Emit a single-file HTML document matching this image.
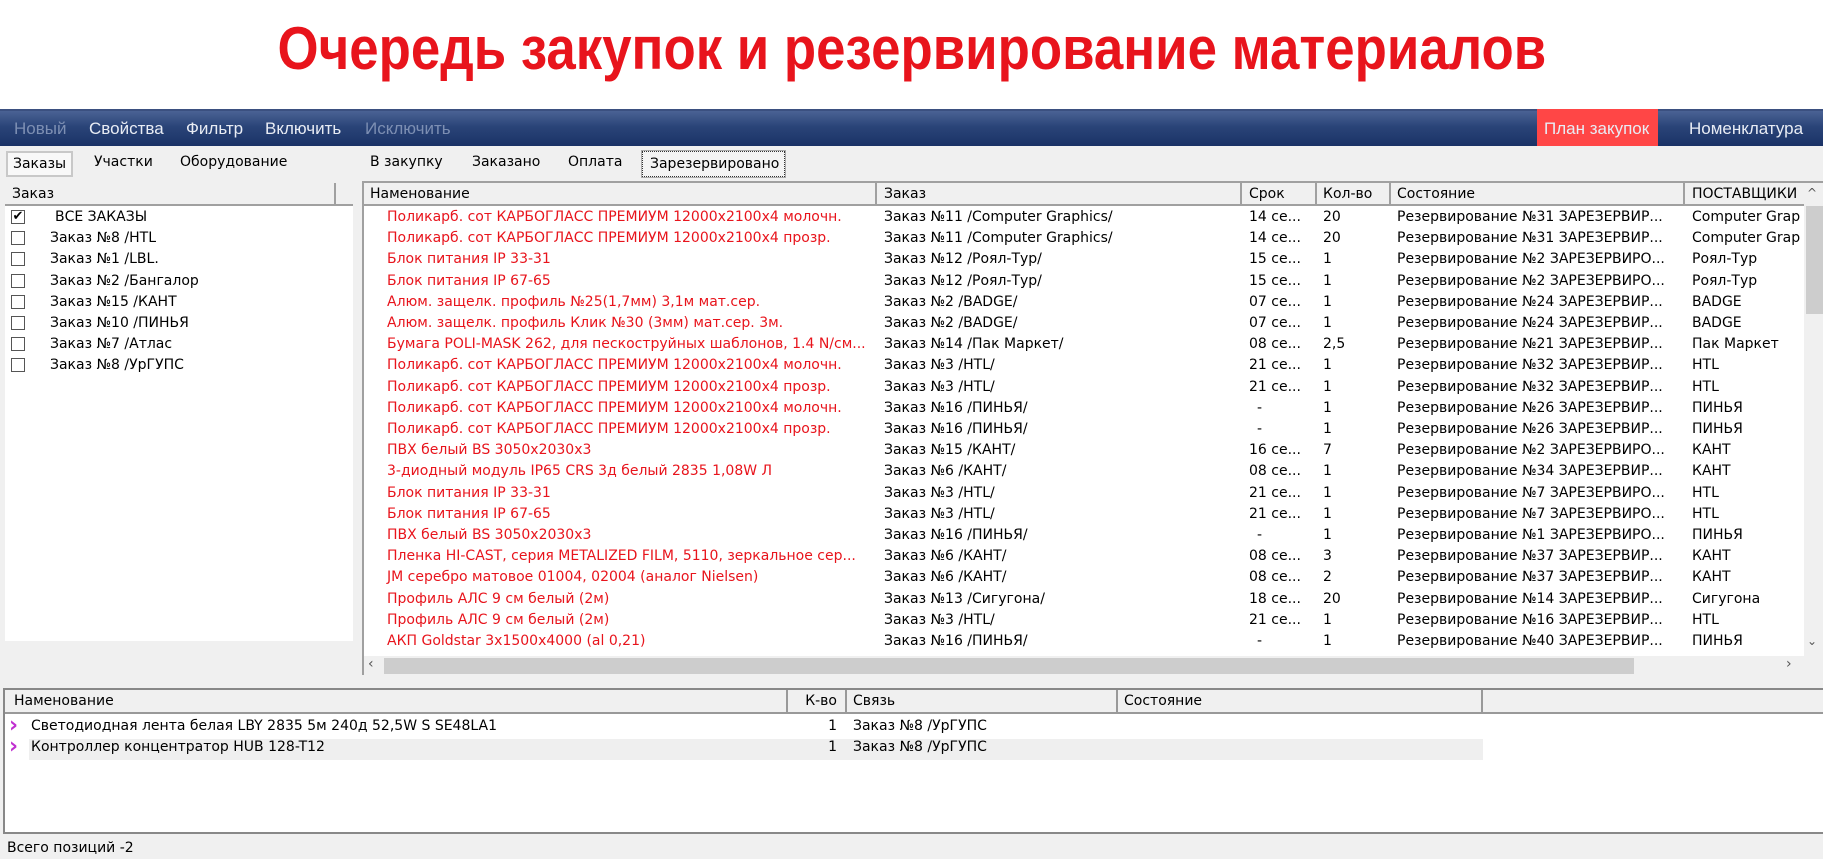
<!DOCTYPE html>
<html><head><meta charset="utf-8"><style>
*{margin:0;padding:0;box-sizing:border-box}
body{width:1823px;height:859px;background:#fff;position:relative;overflow:hidden;font-family:Tahoma,"DejaVu Sans","Liberation Sans",sans-serif;font-size:14px;color:#000}
.a{position:absolute;white-space:nowrap}
#title{left:0;width:1823px;top:14px;text-align:center;font-family:"Liberation Sans",sans-serif;font-weight:bold;font-size:60px;color:#e8141c;line-height:70px}
#title span{display:inline-block;transform:scaleX(0.88)}
#tb{left:0;top:109px;width:1823px;height:37px;background:linear-gradient(#4a6294,#2a4478 45%,#1a3266);border-top:2px solid #3b5080}
#tb .a{top:8px;font-family:"Liberation Sans",sans-serif;font-size:17px;color:#e8ecf4}
#main{left:0;top:146px;width:1823px;height:713px;background:#f0f0f0}
.hd{background:#f0f0f0;border-bottom:2px solid #a0a0a0}
.red{color:#e8141c}
.row{position:absolute;height:21px;line-height:21px}
.mk{color:#c030d0;font-weight:bold;font-size:22px;line-height:20px}
</style></head><body>
<div id="title" class="a"><span>Очередь закупок и резервирование материалов</span></div>
<div id="tb" class="a">
<div class="a" style="left:14px;color:#7d8fb3">Новый</div>
<div class="a" style="left:89px">Свойства</div>
<div class="a" style="left:186px">Фильтр</div>
<div class="a" style="left:265px">Включить</div>
<div class="a" style="left:365px;color:#7d8fb3">Исключить</div>
<div class="a" style="left:1537px;top:-2px;width:121px;height:37px;background:#ff4646"></div>
<div class="a" style="left:1544px">План закупок</div>
<div class="a" style="left:1689px">Номенклатура</div>
</div>
<div id="main" class="a"></div>
<div class="a" style="left:6px;top:151px;width:67px;height:26px;border:2px solid #c8c8c8;background:#f8f8f8"></div>
<div class="a" style="left:13px;top:156px">Заказы</div>
<div class="a" style="left:94px;top:154px">Участки</div>
<div class="a" style="left:180px;top:154px">Оборудование</div>
<div class="a" style="left:370px;top:154px">В закупку</div>
<div class="a" style="left:472px;top:154px">Заказано</div>
<div class="a" style="left:568px;top:154px">Оплата</div>
<div class="a" style="left:642px;top:151px;width:143px;height:26px;border:1px dotted #333;background:#f4f4f4;outline:1px solid #aaa"></div>
<div class="a" style="left:650px;top:156px">Зарезервировано</div>
<div class="a" style="left:5px;top:183px;width:348px;height:458px;background:#fff"></div>
<div class="a hd" style="left:5px;top:183px;width:348px;height:23px"></div>
<div class="a" style="left:334px;top:183px;width:2px;height:21px;background:#a0a0a0"></div>
<div class="a" style="left:12px;top:186px">Заказ</div>
<div id="left"></div>
<div class="a" style="left:362px;top:181px;width:1461px;height:494px;background:#fff;border-left:2px solid #a0a0a0;border-top:2px solid #a0a0a0"></div>
<div class="a hd" style="left:364px;top:183px;width:1440px;height:23px"></div>
<div class="a" style="left:370px;top:186px">Наменование</div>
<div class="a" style="left:884px;top:186px">Заказ</div>
<div class="a" style="left:1249px;top:186px">Срок</div>
<div class="a" style="left:1323px;top:186px">Кол-во</div>
<div class="a" style="left:1397px;top:186px">Состояние</div>
<div class="a" style="left:1692px;top:186px">ПОСТАВЩИКИ</div>
<div class="a" style="left:875px;top:183px;width:2px;height:21px;background:#a0a0a0"></div>
<div class="a" style="left:1240px;top:183px;width:2px;height:21px;background:#a0a0a0"></div>
<div class="a" style="left:1315px;top:183px;width:2px;height:21px;background:#a0a0a0"></div>
<div class="a" style="left:1389px;top:183px;width:2px;height:21px;background:#a0a0a0"></div>
<div class="a" style="left:1683px;top:183px;width:2px;height:21px;background:#a0a0a0"></div>
<div id="grid"></div>
<div class="a" style="left:1804px;top:183px;width:19px;height:473px;background:#f0f0f0"></div>
<div class="a" style="left:1807px;top:186px;font-size:12px;color:#555">^</div>
<div class="a" style="left:1806px;top:206px;width:17px;height:108px;background:#cdcdcd"></div>
<div class="a" style="left:1807px;top:634px;font-size:12px;color:#555">⌄</div>
<div class="a" style="left:364px;top:656px;width:1459px;height:19px;background:#f0f0f0"></div>
<div class="a" style="left:368px;top:656px;font-size:14px;color:#555">‹</div>
<div class="a" style="left:384px;top:658px;width:1250px;height:16px;background:#cdcdcd"></div>
<div class="a" style="left:1786px;top:656px;font-size:14px;color:#555">›</div>
<div class="a" style="left:3px;top:688px;width:1820px;height:146px;background:#fff;border:2px solid #888;border-right:none"></div>
<div class="a hd" style="left:5px;top:690px;width:1818px;height:24px;border-bottom:2px solid #999"></div>
<div class="a" style="left:786px;top:690px;width:2px;height:22px;background:#999"></div>
<div class="a" style="left:845px;top:690px;width:2px;height:22px;background:#999"></div>
<div class="a" style="left:1116px;top:690px;width:2px;height:22px;background:#999"></div>
<div class="a" style="left:1481px;top:690px;width:2px;height:22px;background:#999"></div>
<div class="a" style="left:14px;top:693px">Наменование</div>
<div class="a" style="left:788px;top:693px;width:49px;text-align:right">К-во</div>
<div class="a" style="left:853px;top:693px">Связь</div>
<div class="a" style="left:1124px;top:693px">Состояние</div>
<div class="a" style="left:29px;top:739px;width:1454px;height:21px;background:#efefef"></div>
<div class="a mk" style="left:9px;top:716px">›</div>
<div class="a mk" style="left:9px;top:737px">›</div>
<div class="a" style="left:31px;top:718px">Светодиодная лента белая LBY 2835 5м 240д 52,5W S SE48LA1</div>
<div class="a" style="left:788px;top:718px;width:49px;text-align:right">1</div>
<div class="a" style="left:853px;top:718px">Заказ №8 /УрГУПС</div>
<div class="a" style="left:31px;top:739px">Контроллер концентратор HUB 128-T12</div>
<div class="a" style="left:788px;top:739px;width:49px;text-align:right">1</div>
<div class="a" style="left:853px;top:739px">Заказ №8 /УрГУПС</div>
<div class="a" style="left:7px;top:840px">Всего позиций -2</div>
<script>
var L=[["ВСЕ ЗАКАЗЫ",1],["Заказ №8 /HTL"],["Заказ №1 /LBL."],["Заказ №2 /Бангалор"],["Заказ №15 /КАНТ"],["Заказ №10 /ПИНЬЯ"],["Заказ №7 /Атлас"],["Заказ №8 /УрГУПС"]];
var h="";
L.forEach(function(r,i){var y=207+i*21.2;
h+='<div class="a" style="left:11px;top:'+(y+3)+'px;width:14px;height:14px;border:1px solid #555;background:#fff;font-size:13px;line-height:12px;text-align:center">'+(r[1]?'✔':'')+'</div>';
h+='<div class="row" style="left:'+(r[1]?55:50)+'px;top:'+y+'px">'+r[0]+'</div>';});
document.getElementById('left').innerHTML=h;
var G=[
["Поликарб. сот КАРБОГЛАСС ПРЕМИУМ 12000x2100x4 молочн.","Заказ №11 /Computer Graphics/","14 се...","20","Резервирование №31 ЗАРЕЗЕРВИР...","Computer Grap"],
["Поликарб. сот КАРБОГЛАСС ПРЕМИУМ 12000x2100x4 прозр.","Заказ №11 /Computer Graphics/","14 се...","20","Резервирование №31 ЗАРЕЗЕРВИР...","Computer Grap"],
["Блок питания IP 33-31","Заказ №12 /Роял-Тур/","15 се...","1","Резервирование №2 ЗАРЕЗЕРВИРО...","Роял-Тур"],
["Блок питания IP 67-65","Заказ №12 /Роял-Тур/","15 се...","1","Резервирование №2 ЗАРЕЗЕРВИРО...","Роял-Тур"],
["Алюм. защелк. профиль №25(1,7мм) 3,1м мат.сер.","Заказ №2 /BADGE/","07 се...","1","Резервирование №24 ЗАРЕЗЕРВИР...","BADGE"],
["Алюм. защелк. профиль Клик №30 (3мм) мат.сер. 3м.","Заказ №2 /BADGE/","07 се...","1","Резервирование №24 ЗАРЕЗЕРВИР...","BADGE"],
["Бумага POLI-MASK 262, для пескоструйных шаблонов, 1.4 N/см...","Заказ №14 /Пак Маркет/","08 се...","2,5","Резервирование №21 ЗАРЕЗЕРВИР...","Пак Маркет"],
["Поликарб. сот КАРБОГЛАСС ПРЕМИУМ 12000x2100x4 молочн.","Заказ №3 /HTL/","21 се...","1","Резервирование №32 ЗАРЕЗЕРВИР...","HTL"],
["Поликарб. сот КАРБОГЛАСС ПРЕМИУМ 12000x2100x4 прозр.","Заказ №3 /HTL/","21 се...","1","Резервирование №32 ЗАРЕЗЕРВИР...","HTL"],
["Поликарб. сот КАРБОГЛАСС ПРЕМИУМ 12000x2100x4 молочн.","Заказ №16 /ПИНЬЯ/","-","1","Резервирование №26 ЗАРЕЗЕРВИР...","ПИНЬЯ"],
["Поликарб. сот КАРБОГЛАСС ПРЕМИУМ 12000x2100x4 прозр.","Заказ №16 /ПИНЬЯ/","-","1","Резервирование №26 ЗАРЕЗЕРВИР...","ПИНЬЯ"],
["ПВХ белый BS 3050x2030x3","Заказ №15 /КАНТ/","16 се...","7","Резервирование №2 ЗАРЕЗЕРВИРО...","КАНТ"],
["3-диодный модуль IP65 CRS 3д белый 2835 1,08W Л","Заказ №6 /КАНТ/","08 се...","1","Резервирование №34 ЗАРЕЗЕРВИР...","КАНТ"],
["Блок питания IP 33-31","Заказ №3 /HTL/","21 се...","1","Резервирование №7 ЗАРЕЗЕРВИРО...","HTL"],
["Блок питания IP 67-65","Заказ №3 /HTL/","21 се...","1","Резервирование №7 ЗАРЕЗЕРВИРО...","HTL"],
["ПВХ белый BS 3050x2030x3","Заказ №16 /ПИНЬЯ/","-","1","Резервирование №1 ЗАРЕЗЕРВИРО...","ПИНЬЯ"],
["Пленка HI-CAST, серия METALIZED FILM, 5110, зеркальное сер...","Заказ №6 /КАНТ/","08 се...","3","Резервирование №37 ЗАРЕЗЕРВИР...","КАНТ"],
["JM серебро матовое 01004, 02004 (аналог Nielsen)","Заказ №6 /КАНТ/","08 се...","2","Резервирование №37 ЗАРЕЗЕРВИР...","КАНТ"],
["Профиль АЛС 9 см белый (2м)","Заказ №13 /Сигугона/","18 се...","20","Резервирование №14 ЗАРЕЗЕРВИР...","Сигугона"],
["Профиль АЛС 9 см белый (2м)","Заказ №3 /HTL/","21 се...","1","Резервирование №16 ЗАРЕЗЕРВИР...","HTL"],
["АКП Goldstar 3x1500x4000 (al 0,21)","Заказ №16 /ПИНЬЯ/","-","1","Резервирование №40 ЗАРЕЗЕРВИР...","ПИНЬЯ"]];
var X=[387,884,1249,1323,1397,1692];h="";
G.forEach(function(r,i){var y=207+i*21.2;
r.forEach(function(c,j){var l=X[j];if(j==2&&c=="-")l=1257;
h+='<div class="row'+(j==0?' red':'')+'" style="left:'+l+'px;top:'+y+'px">'+c+'</div>';});});
document.getElementById('grid').innerHTML=h;
</script>
</body></html>
